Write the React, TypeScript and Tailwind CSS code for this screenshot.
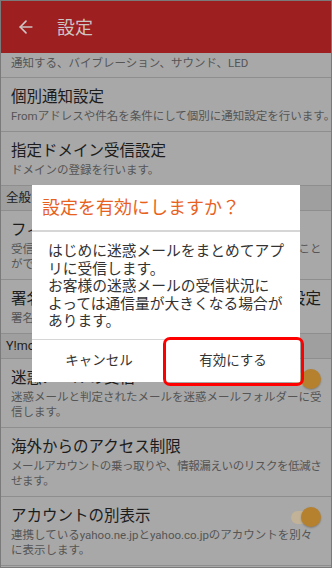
import { ArrowLeft } from "lucide-react";

const font = { fontFamily: 'Roboto, "Noto Sans CJK JP", "Noto Sans", sans-serif' };

function Row({
    title,
    sub,
    toggle,
    tight,
}: {
    title: string;
    sub: string[];
    toggle?: boolean;
    tight?: boolean;
}) {
    return (
        <div className="relative border-b border-[#8e8e8e] px-[10px] pt-[7px] pb-[7px]">
            <div className="whitespace-nowrap text-[15.5px] leading-[24px] text-[#1c1c1c]">{title}</div>
            {sub.map((s, i) => (
                <div
                    key={i}
                    className={
                        tight
                            ? "whitespace-nowrap text-[11.5px] leading-[15px] tracking-[-0.4px] text-[#555]"
                            : "whitespace-nowrap text-[11.5px] leading-[15px] text-[#555]"
                    }
                >
                    {s}
                </div>
            ))}
            {toggle && (
                <div className="absolute right-[10px] top-[10px] flex h-[20px] w-[32px] items-center">
                    <div className="ml-[2px] h-[13px] w-[26px] rounded-full bg-[#c2b297]" />
                    <div className="absolute right-0 h-[20px] w-[20px] rounded-full bg-[#b5812e] shadow-[0_1px_2px_rgba(0,0,0,0.25)]" />
                </div>
            )}
        </div>
    );
}

function Section({ label }: { label: string }) {
    return (
        <div className="flex h-[25px] items-center border-b border-[#8e8e8e] bg-[#9f9f9f] px-[5px] text-[12.5px] text-[#1c1c1c]">
            {label}
        </div>
    );
}

export default function App() {
    return (
        <div
            className="relative box-border h-[568px] w-[332px] overflow-hidden border border-[#7a7a7a] bg-[#a8a8a8]"
            style={font}
        >
            {/* header */}
            <div className="flex h-[52px] items-center bg-[#9e1f20] text-[#cdc4c4]">
                <ArrowLeft size={20} strokeWidth={2} className="ml-[15px]" />
                <span className="ml-[21px] text-[18px]">設定</span>
            </div>

            <div className="h-[25px] border-b border-[#8e8e8e] px-[10px] pt-[2px] text-[11.5px] leading-[16px] text-[#555]">
                通知する、バイブレーション、サウンド、LED
            </div>
            <Row title="個別通知設定" sub={["Fromアドレスや件名を条件にして個別に通知設定を行います。"]} />
            <Row title="指定ドメイン受信設定" sub={["ドメインの登録を行います。"]} />
            <Section label="全般" />
            <Row
                title="フィルター設定"
                sub={["受信したメールを条件に応じてフォルダーに振り分けること", "ができます。"]}
            />
            <Row title="署名をメール本文の末尾に自動挿入する設定" sub={["署名の設定を行います。"]} />
            <Section label="Y!mobileメール" />
            <Row
                title="迷惑メールの受信"
                sub={["迷惑メールと判定されたメールを迷惑メールフォルダーに受", "信します。"]}
                toggle
            />
            <Row
                title="海外からのアクセス制限"
                sub={["メールアカウントの乗っ取りや、情報漏えいのリスクを低減さ", "せます。"]}
                tight
            />
            <Row
                title="アカウントの別表示"
                sub={["連携しているyahoo.ne.jpとyahoo.co.jpのアカウントを別々", "に表示します。"]}
                toggle
            />

            {/* dialog */}
            <div className="absolute left-[31px] top-[184px] w-[268px] bg-white">
                <div className="flex h-[47px] items-center border-b-2 border-[#d6d6d6] pl-[10px] text-[18px] text-[#e8621f]">
                    設定を有効にしますか？
                </div>
                <div className="px-[16px] pt-[11px] pb-[8px] text-[14.75px] leading-[17.5px] text-[#333]">
                    <div>はじめに迷惑メールをまとめてアプ</div>
                    <div>リに受信します。</div>
                    <div>お客様の迷惑メールの受信状況に</div>
                    <div>よっては通信量が大きくなる場合が</div>
                    <div>あります。</div>
                </div>
                <div className="flex h-[43px] border-t border-[#d6d6d6] text-[13.5px] text-[#333]">
                    <div className="flex flex-1 items-center justify-center">キャンセル</div>
                    <div className="flex flex-1 items-center justify-center">有効にする</div>
                </div>
            </div>

            {/* highlight annotation */}
            <div className="absolute left-[162px] top-[336px] h-[49px] w-[141px] rounded-[7px] border-[3.5px] border-[#ff0000]" />
        </div>
    );
}
